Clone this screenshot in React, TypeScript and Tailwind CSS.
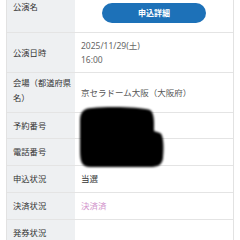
function Row({
  label,
  h,
  children,
  align = "center",
}: {
  label: React.ReactNode;
  h: string;
  children?: React.ReactNode;
  align?: "center" | "start";
}) {
  return (
    <div className={`grid grid-cols-[68px_1fr] border-b border-[#e4e4e4] ${h}`}>
      <div className="bg-[#eef0f2] flex items-center px-[6px] text-[8.3px] leading-[14px] text-[#333] whitespace-nowrap">
        {label}
      </div>
      <div
        className={`flex px-[6px] text-[8.5px] leading-[14px] text-[#555] ${
          align === "center" ? "items-center" : "items-start"
        }`}
      >
        {children}
      </div>
    </div>
  );
}

export default function App() {
  return (
    <div
      className="relative w-[240px] h-[240px] overflow-hidden bg-white"
      style={{ fontFamily: '"Noto Sans", "Noto Sans CJK JP", sans-serif' }}
    >
      <div className="-mt-[18px] mx-[6px] border-x border-[#e2e2e2]">
        <Row label="公演名" h="h-[51px]" align="start">
          <div className="w-full flex justify-center pt-[21px]">
            <button className="w-[104px] h-[20px] rounded-full bg-[#1d71b8] text-white text-[8px] font-bold">
              申込詳細
            </button>
          </div>
        </Row>
        <Row label="公演日時" h="h-[40px]">
          <div className="text-[#666]">
            <div>2025/11/29(土)</div>
            <div>16:00</div>
          </div>
        </Row>
        <Row
          label={
            <div className="-mt-[6px] leading-[15px]">
              会場（都道府県
              <br />
              名）
            </div>
          }
          h="h-[40px]"
        >
          京セラドーム大阪（大阪府）
        </Row>
        <Row label="予約番号" h="h-[26px]" />
        <Row label="電話番号" h="h-[27px]" />
        <Row label="申込状況" h="h-[27px]">
          <span className="text-[#333]">当選</span>
        </Row>
        <Row label="決済状況" h="h-[27px]">
          <span className="text-[#d295cc]">決済済</span>
        </Row>
        <Row label="発券状況" h="h-[27px]" />
      </div>

      {/* redacted area */}
      <svg
        className="absolute left-0 top-0 pointer-events-none"
        width="240"
        height="240"
        viewBox="0 0 240 240"
      >
        <path
          d="M92 108 C110 106 140 107 150 110 C155 113 154 125 154 131 L160 133 C164 135 164 150 163 158 C162 165 158 167 150 167 L90 167 C82 167 80 162 80 150 L80 120 C80 112 84 108 92 108 Z"
          fill="#000"
          style={{ filter: "blur(0.8px)" }}
        />
      </svg>
    </div>
  );
}
